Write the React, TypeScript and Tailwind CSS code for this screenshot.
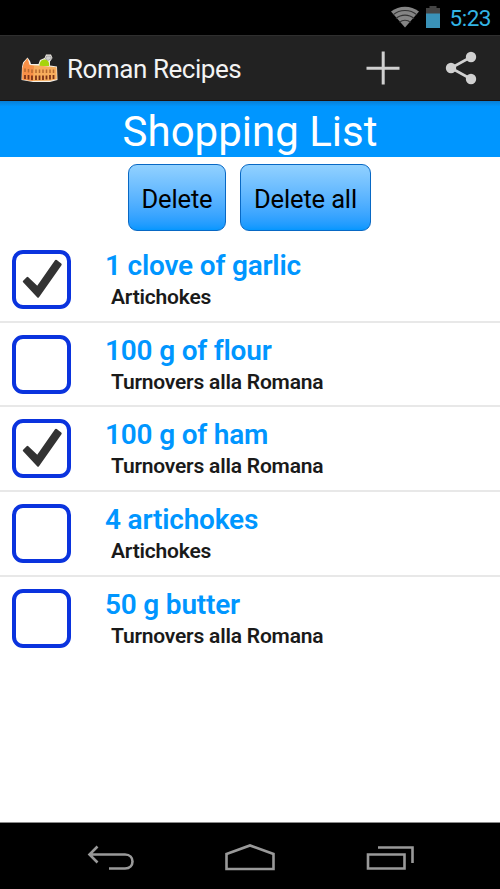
interface Ingredient {
  name: string
  recipe: string
  checked: boolean
}

const INGREDIENTS: Ingredient[] = [
  { name: '1 clove of garlic', recipe: 'Artichokes', checked: true },
  { name: '100 g of flour', recipe: 'Turnovers alla Romana', checked: false },
  { name: '100 g of ham', recipe: 'Turnovers alla Romana', checked: true },
  { name: '4 artichokes', recipe: 'Artichokes', checked: false },
  { name: '50 g butter', recipe: 'Turnovers alla Romana', checked: false },
]

/** Colosseum with a small green chef behind it */
function AppLogo() {
  return (
    <svg className="h-[29px] w-[38px]" viewBox="0 0 38 29">
      <path
        d="M1.500 26 L2 13 L3 8.500 L7.500 3.500 L10 7 L11 10 L18.500 10 L20 6 L24.500 4 L26 .5 L31 .5 L32.500 4 L30 7.500 L30 11.500 L37 12.500 L37.500 26 L30 28 L13 28 Z"
        fill="#f4efe8"
      />
      <path d="M19.500 12 C19.500 7.500 21.500 5.500 25 5.500 C28.500 6 29.500 9 29 12 Z" fill="#a6d40c" />
      <path d="M25.500 5 L26.500 2 L30.500 2 L31.500 4.500 L28 6.500 Z" fill="#cfcfcf" stroke="#8d8d8d" strokeWidth=".7" />
      <path d="M2.500 14 L4 9 L7.500 4.500 L9.500 11 L18 11.500 L36.500 13.300 L36.800 25.300 L30 26.800 L13 27 L2.300 25.500 Z" fill="#f7ad5c" />
      <path d="M2.500 14 L4 9 L7.500 4.500 L9.500 11 L14 12 L13 27 L2.300 25.500 Z" fill="#f78f47" />
      <path
        d="M5 14.500v3.500 M8.500 15v3.500 M12 15.500v3.500 M16 15.500v3.500 M19.500 15.500v3.500 M23 15.500v3.500 M26.500 15.500v3.500 M30 15.500v3.500 M33.500 15.500v3.500"
        stroke="#b5692f"
        strokeWidth="1.500"
      />
      <path
        d="M5 21v4 M8.500 21v4.500 M12 21.500v4.500 M16 21.500v4.500 M19.500 21.500v4.500 M23 21.500v4.500 M26.500 21.500v4 M30 21v4.500 M33.500 21v4"
        stroke="#7a3217"
        strokeWidth="1.800"
      />
    </svg>
  )
}

function StatusBar() {
  return (
    <div className="flex h-[35px] items-center justify-end bg-black pr-[9px] pb-[1px]">
      <svg className="h-[22px] w-[28px]" viewBox="0 0 28 22">
        <path d="M14 21.500 L0 5.500 C8 -1 20 -1 28 5.500 Z" fill="#858585" />
        <path
          d="M2 8.800 C9 3 19 3 26 8.800 M5 12.500 C10 8 18 8 23 12.500 M8.500 16.300 C11.500 13.500 16.500 13.500 19.500 16.300"
          stroke="#333"
          strokeWidth="1.100"
          fill="none"
        />
      </svg>
      <svg className="ml-[7px] h-[22px] w-[14px]" viewBox="0 0 14 22">
        <path d="M3.500 0h7v2H14v6H0V2h3.500z" fill="#444" />
        <path d="M0 7.500h14V22H0z" fill="#3a92b8" />
      </svg>
      <span className="ml-[10px] pt-[2px] text-[22.500px] leading-none tracking-[-0.5px] text-[#33b5e5]">5:23</span>
    </div>
  )
}

function ActionBar() {
  return (
    <header className="flex h-[66px] items-center border-t border-b border-t-[#2f2f2f] border-b-[#1b1110] bg-[#222] pr-[22px] pl-[20px]">
      <AppLogo />
      <h1 className="ml-[9px] flex-1 pt-[1px] text-[26px] leading-none tracking-[-0.45px] text-[#f3f3f3]">
        Roman Recipes
      </h1>
      <button>
        <svg className="h-[34px] w-[34px]" viewBox="0 0 34 34">
          <path d="M17.200 .5v33 M.5 17.200h33" stroke="#d0d0d0" strokeWidth="3" />
        </svg>
      </button>
      <button className="ml-[44px]">
        <svg className="h-[34px] w-[34px]" viewBox="0 0 34 34">
          <path d="M27 6 L7 17 L27 28" stroke="#d0d0d0" strokeWidth="2.600" fill="none" />
          <circle cx="27" cy="6" r="5.200" fill="#d0d0d0" />
          <circle cx="7" cy="17" r="5.200" fill="#d0d0d0" />
          <circle cx="27" cy="28" r="5.200" fill="#d0d0d0" />
        </svg>
      </button>
    </header>
  )
}

function ListButton({ label, className }: { label: string; className: string }) {
  return (
    <button
      className={`h-[67px] rounded-[9px] border border-[#0868c4] bg-linear-to-b from-[#91d1ff] to-[#0397ff] pt-[3px] text-[25.500px] tracking-[-0.15px] text-black ${className}`}
    >
      {label}
    </button>
  )
}

function CheckBox({ checked }: { checked: boolean }) {
  return (
    <div className="flex h-[59px] w-[59px] items-center justify-center rounded-[11px] border-4 border-[#0a33de] bg-white">
      {checked && (
        <svg className="h-[41px] w-[42px]" viewBox="0 0 42 41">
          <path
            d="M3 22.500 L6.500 19 L16.500 28.500 L35 2 L39.500 5.500 L17 37.500 Z"
            fill="#333"
            stroke="#333"
            strokeWidth="2.400"
            strokeLinejoin="round"
          />
        </svg>
      )}
    </div>
  )
}

function IngredientRow({ item }: { item: Ingredient }) {
  return (
    <li className="flex h-[84.700px] border-b-2 border-[#e8e8e8] pt-[12px] pl-[12px] last:border-transparent">
      <CheckBox checked={item.checked} />
      <div className="ml-[34px]">
        <div className="text-[28px] leading-[31px] font-semibold tracking-[-0.2px] text-[#0096ff]">{item.name}</div>
        <div className="ml-[6px] text-[21px] leading-[33px] font-semibold tracking-[-0.2px] text-[#1a1a1a]">
          {item.recipe}
        </div>
      </div>
    </li>
  )
}

function NavBar() {
  return (
    <nav className="flex h-[67px] items-center justify-between border-t border-[#8a8a8a] bg-black pt-[3px] pr-[86px] pl-[87px]">
      <svg className="h-[28px] w-[48px]" viewBox="0 0 48 28" fill="none" stroke="#999" strokeWidth="2.600">
        <path d="M10.500 2.500 L2.500 10.500 L10.500 18.500 M3 10.500 H38 C48 10.500 48 24.500 38 24.500 H22" />
      </svg>
      <svg className="h-[28px] w-[52px]" viewBox="0 0 52 28" fill="none" stroke="#999" strokeWidth="2.600">
        <path d="M1.500 10 L25 1.500 L48.500 10 V25 H1.500 Z" />
      </svg>
      <svg className="h-[28px] w-[48px]" viewBox="0 0 48 28" fill="none" stroke="#999" strokeWidth="2.600">
        <path d="M2 10.500 H38.500 V24.500 H2 Z M12 3.500 H46.500 V19" />
      </svg>
    </nav>
  )
}

export default function App() {
  return (
    <div className="flex h-[889px] w-[500px] flex-col overflow-hidden bg-white font-[Roboto,sans-serif]">
      <StatusBar />
      <ActionBar />
      <h2 className="h-[56px] bg-linear-to-b from-[#087fd6] from-0% via-[#0096ff] via-10% to-[#0096ff] text-center text-[42px] leading-[62px] text-white">
        Shopping List
      </h2>
      <div className="flex justify-center gap-[14px] pt-[7px] pr-[1px] pb-[7px]">
        <ListButton label="Delete" className="w-[98px]" />
        <ListButton label="Delete all" className="w-[131px]" />
      </div>
      <ul className="flex-1">
        {INGREDIENTS.map((item) => (
          <IngredientRow key={item.name} item={item} />
        ))}
      </ul>
      <NavBar />
    </div>
  )
}
